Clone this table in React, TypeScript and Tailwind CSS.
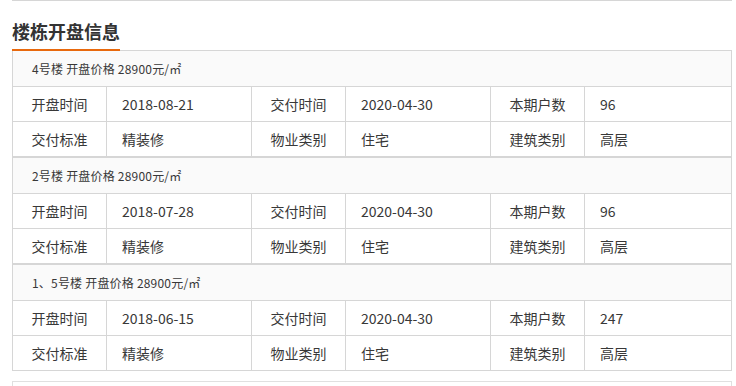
import React from "react";

type Block = {
  title: string;
  open: string;
  deliver: string;
  count: string;
};

const blocks: Block[] = [
  { title: "4号楼 开盘价格 28900元/㎡", open: "2018-08-21", deliver: "2020-04-30", count: "96" },
  { title: "2号楼 开盘价格 28900元/㎡", open: "2018-07-28", deliver: "2020-04-30", count: "96" },
  { title: "1、5号楼 开盘价格 28900元/㎡", open: "2018-06-15", deliver: "2020-04-30", count: "247" },
];

function Label({ children }: { children: React.ReactNode }) {
  return (
    <div className="flex items-center justify-center border-r border-[#d6d6d6]">{children}</div>
  );
}

function Value({ children, last }: { children: React.ReactNode; last?: boolean }) {
  return (
    <div className={last ? "flex items-center pl-[15px]" : "flex items-center pl-[15px] border-r border-[#d6d6d6]"}>
      {children}
    </div>
  );
}

function BlockTable({ b }: { b: Block }) {
  return (
    <div className="border border-[#d6d6d6]">
      <div className="h-[36px] bg-[#fafafa] border-b border-[#d6d6d6] flex items-center pl-[19px] text-[12px] tracking-[0.2px] whitespace-pre">
        {b.title}
      </div>
      <div className="h-[35px] border-b border-[#d6d6d6] grid grid-cols-[94px_145px_94px_145px_94px_1fr] text-[14px]">
        <Label>开盘时间</Label>
        <Value>{b.open}</Value>
        <Label>交付时间</Label>
        <Value>{b.deliver}</Value>
        <Label>本期户数</Label>
        <Value last>{b.count}</Value>
      </div>
      <div className="h-[34px] grid grid-cols-[94px_145px_94px_145px_94px_1fr] text-[14px]">
        <Label>交付标准</Label>
        <Value>精装修</Value>
        <Label>物业类别</Label>
        <Value>住宅</Value>
        <Label>建筑类别</Label>
        <Value last>高层</Value>
      </div>
    </div>
  );
}

export default function App() {
  return (
    <div
      className="w-[736px] h-[386px] bg-white overflow-hidden text-[#383838]"
      style={{ fontFamily: '"Noto Sans CJK SC", "Noto Sans", sans-serif' }}
    >
      <div className="ml-[12px] w-[720px]">
        <div className="h-px bg-[#d6d6d6]" />
        <div className="relative z-10 w-[108px] h-[50px] border-b-2 border-[#e8690d] flex items-end pb-[6px]">
          <h2 className="text-[18px] font-bold leading-[24px] whitespace-nowrap text-[#333]">楼栋开盘信息</h2>
        </div>
        <div className="-mt-px">
          {blocks.map((b, i) => (
            <BlockTable key={i} b={b} />
          ))}
        </div>
        <div className="mt-[10px] h-[40px] border border-[#e0e0e0]" />
      </div>
    </div>
  );
}
